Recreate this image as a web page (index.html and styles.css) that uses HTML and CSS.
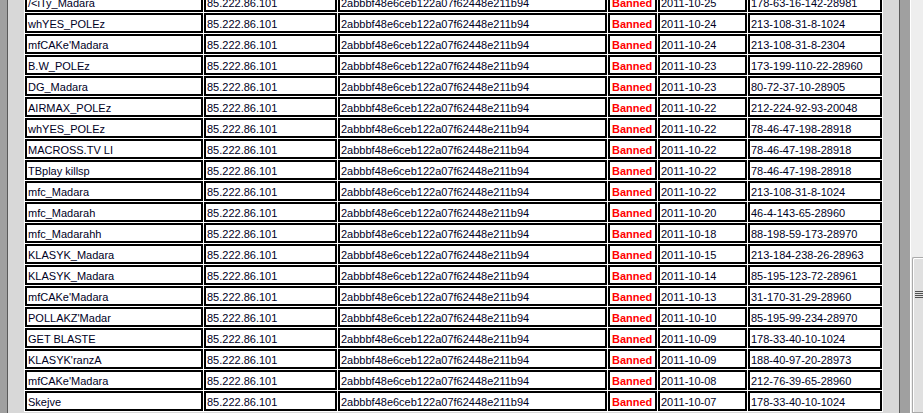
FILE: index.html
```html
<!DOCTYPE html>
<html>
  <head>
    <meta name="viewport" content="width=device-width, initial-scale=1.0">
    <title>Ban list</title>
    <link rel="stylesheet" href="styles.css">
  </head>
  <body>

    <div class="rail-left"></div>

    <div class="frame">
      <table class="bans">
        <tbody>
          <tr><td class="c-name">/&lt;iTy_Madara</td><td class="c-ip">85.222.86.101</td><td class="c-hash">2abbbf48e6ceb122a07f62448e211b94</td><td class="c-state">Banned</td><td class="c-date">2011-10-25</td><td class="c-addr">178-63-16-142-28981</td></tr>
          <tr><td class="c-name">whYES_POLEz</td><td class="c-ip">85.222.86.101</td><td class="c-hash">2abbbf48e6ceb122a07f62448e211b94</td><td class="c-state">Banned</td><td class="c-date">2011-10-24</td><td class="c-addr">213-108-31-8-1024</td></tr>
          <tr><td class="c-name">mfCAKe'Madara</td><td class="c-ip">85.222.86.101</td><td class="c-hash">2abbbf48e6ceb122a07f62448e211b94</td><td class="c-state">Banned</td><td class="c-date">2011-10-24</td><td class="c-addr">213-108-31-8-2304</td></tr>
          <tr><td class="c-name">B.W_POLEz</td><td class="c-ip">85.222.86.101</td><td class="c-hash">2abbbf48e6ceb122a07f62448e211b94</td><td class="c-state">Banned</td><td class="c-date">2011-10-23</td><td class="c-addr">173-199-110-22-28960</td></tr>
          <tr><td class="c-name">DG_Madara</td><td class="c-ip">85.222.86.101</td><td class="c-hash">2abbbf48e6ceb122a07f62448e211b94</td><td class="c-state">Banned</td><td class="c-date">2011-10-23</td><td class="c-addr">80-72-37-10-28905</td></tr>
          <tr><td class="c-name">AIRMAX_POLEz</td><td class="c-ip">85.222.86.101</td><td class="c-hash">2abbbf48e6ceb122a07f62448e211b94</td><td class="c-state">Banned</td><td class="c-date">2011-10-22</td><td class="c-addr">212-224-92-93-20048</td></tr>
          <tr><td class="c-name">whYES_POLEz</td><td class="c-ip">85.222.86.101</td><td class="c-hash">2abbbf48e6ceb122a07f62448e211b94</td><td class="c-state">Banned</td><td class="c-date">2011-10-22</td><td class="c-addr">78-46-47-198-28918</td></tr>
          <tr><td class="c-name">MACROSS.TV LI</td><td class="c-ip">85.222.86.101</td><td class="c-hash">2abbbf48e6ceb122a07f62448e211b94</td><td class="c-state">Banned</td><td class="c-date">2011-10-22</td><td class="c-addr">78-46-47-198-28918</td></tr>
          <tr><td class="c-name">TBplay killsp</td><td class="c-ip">85.222.86.101</td><td class="c-hash">2abbbf48e6ceb122a07f62448e211b94</td><td class="c-state">Banned</td><td class="c-date">2011-10-22</td><td class="c-addr">78-46-47-198-28918</td></tr>
          <tr><td class="c-name">mfc_Madara</td><td class="c-ip">85.222.86.101</td><td class="c-hash">2abbbf48e6ceb122a07f62448e211b94</td><td class="c-state">Banned</td><td class="c-date">2011-10-22</td><td class="c-addr">213-108-31-8-1024</td></tr>
          <tr><td class="c-name">mfc_Madarah</td><td class="c-ip">85.222.86.101</td><td class="c-hash">2abbbf48e6ceb122a07f62448e211b94</td><td class="c-state">Banned</td><td class="c-date">2011-10-20</td><td class="c-addr">46-4-143-65-28960</td></tr>
          <tr><td class="c-name">mfc_Madarahh</td><td class="c-ip">85.222.86.101</td><td class="c-hash">2abbbf48e6ceb122a07f62448e211b94</td><td class="c-state">Banned</td><td class="c-date">2011-10-18</td><td class="c-addr">88-198-59-173-28970</td></tr>
          <tr><td class="c-name">KLASYK_Madara</td><td class="c-ip">85.222.86.101</td><td class="c-hash">2abbbf48e6ceb122a07f62448e211b94</td><td class="c-state">Banned</td><td class="c-date">2011-10-15</td><td class="c-addr">213-184-238-26-28963</td></tr>
          <tr><td class="c-name">KLASYK_Madara</td><td class="c-ip">85.222.86.101</td><td class="c-hash">2abbbf48e6ceb122a07f62448e211b94</td><td class="c-state">Banned</td><td class="c-date">2011-10-14</td><td class="c-addr">85-195-123-72-28961</td></tr>
          <tr><td class="c-name">mfCAKe'Madara</td><td class="c-ip">85.222.86.101</td><td class="c-hash">2abbbf48e6ceb122a07f62448e211b94</td><td class="c-state">Banned</td><td class="c-date">2011-10-13</td><td class="c-addr">31-170-31-29-28960</td></tr>
          <tr><td class="c-name">POLLAKZ'Madar</td><td class="c-ip">85.222.86.101</td><td class="c-hash">2abbbf48e6ceb122a07f62448e211b94</td><td class="c-state">Banned</td><td class="c-date">2011-10-10</td><td class="c-addr">85-195-99-234-28970</td></tr>
          <tr><td class="c-name">GET BLASTE</td><td class="c-ip">85.222.86.101</td><td class="c-hash">2abbbf48e6ceb122a07f62448e211b94</td><td class="c-state">Banned</td><td class="c-date">2011-10-09</td><td class="c-addr">178-33-40-10-1024</td></tr>
          <tr><td class="c-name">KLASYK'ranzA</td><td class="c-ip">85.222.86.101</td><td class="c-hash">2abbbf48e6ceb122a07f62448e211b94</td><td class="c-state">Banned</td><td class="c-date">2011-10-09</td><td class="c-addr">188-40-97-20-28973</td></tr>
          <tr><td class="c-name">mfCAKe'Madara</td><td class="c-ip">85.222.86.101</td><td class="c-hash">2abbbf48e6ceb122a07f62448e211b94</td><td class="c-state">Banned</td><td class="c-date">2011-10-08</td><td class="c-addr">212-76-39-65-28960</td></tr>
          <tr><td class="c-name">Skejve</td><td class="c-ip">85.222.86.101</td><td class="c-hash">2abbbf48e6ceb122a07f62448e211b94</td><td class="c-state">Banned</td><td class="c-date">2011-10-07</td><td class="c-addr">178-33-40-10-1024</td></tr>
        </tbody>
      </table>
    </div>

    <div class="rail-right"></div>

    <div class="scrollbar">
      <div class="scrollbar-thumb">
        <div class="scrollbar-grip"></div>
      </div>
    </div>

  </body>
</html>
```

FILE: styles.css
```css
* {
  font-family: "Liberation Sans", Arial, sans-serif;
}

body {
  margin: 0px;
  padding: 0px;
  display: flex;
  height: 413px;
  overflow: hidden;
  background-color: rgb(240, 240, 240);
}

.rail-left {
  width: 7px;
  flex: none;
  background-color: rgb(160, 160, 160);
  border-right: 1px solid rgb(90, 90, 90);
}

.frame {
  flex: none;
  width: 859px;
  padding: 0px 16px;
  background-color: rgb(216, 216, 216);
  overflow: hidden;
}

.bans {
  table-layout: fixed;
  width: 859px;
  margin-top: -9px;
  border-collapse: separate;
  border-spacing: 1px;
  background-color: rgb(255, 255, 255);
  font-size: 11px;
  color: rgb(0, 0, 30);
}

.bans td {
  box-sizing: border-box;
  height: 20px;
  padding: 3px 1px 0px 1px;
  line-height: 13px;
  border: 2px solid rgb(0, 0, 0);
  white-space: nowrap;
  overflow: hidden;
}

.c-name {
  width: 178px;
}

.c-ip {
  width: 133px;
}

.c-hash {
  width: 269px;
}

.bans td.c-state {
  width: 49px;
  padding-left: 2px;
  font-weight: bold;
  color: rgb(255, 0, 0);
}

.c-date {
  width: 89px;
}

.c-addr {
  width: 134px;
}

.rail-right {
  width: 10px;
  flex: none;
  background-color: rgb(160, 160, 160);
  border-left: 1px solid rgb(90, 90, 90);
}

.scrollbar {
  flex: 1;
  display: flex;
  flex-direction: column;
  border-left: 1px solid rgb(255, 255, 255);
  background-color: rgb(238, 238, 238);
}

.scrollbar-thumb {
  margin-top: 257px;
  margin-left: 1px;
  flex: 1;
  display: flex;
  flex-direction: column;
  align-items: flex-end;
  border: 1px solid rgb(170, 170, 170);
  border-right: none;
  border-radius: 2px 0px 0px 0px;
  box-shadow: inset 1px 1px 0px rgb(255, 255, 255);
  background-color: rgb(224, 224, 224);
}

.scrollbar-grip {
  margin-top: 33px;
  width: 8px;
  height: 7px;
  background: repeating-linear-gradient(rgb(80, 80, 80) 0px, rgb(80, 80, 80) 1px, rgb(224, 224, 224) 1px, rgb(224, 224, 224) 2px);
}
```
